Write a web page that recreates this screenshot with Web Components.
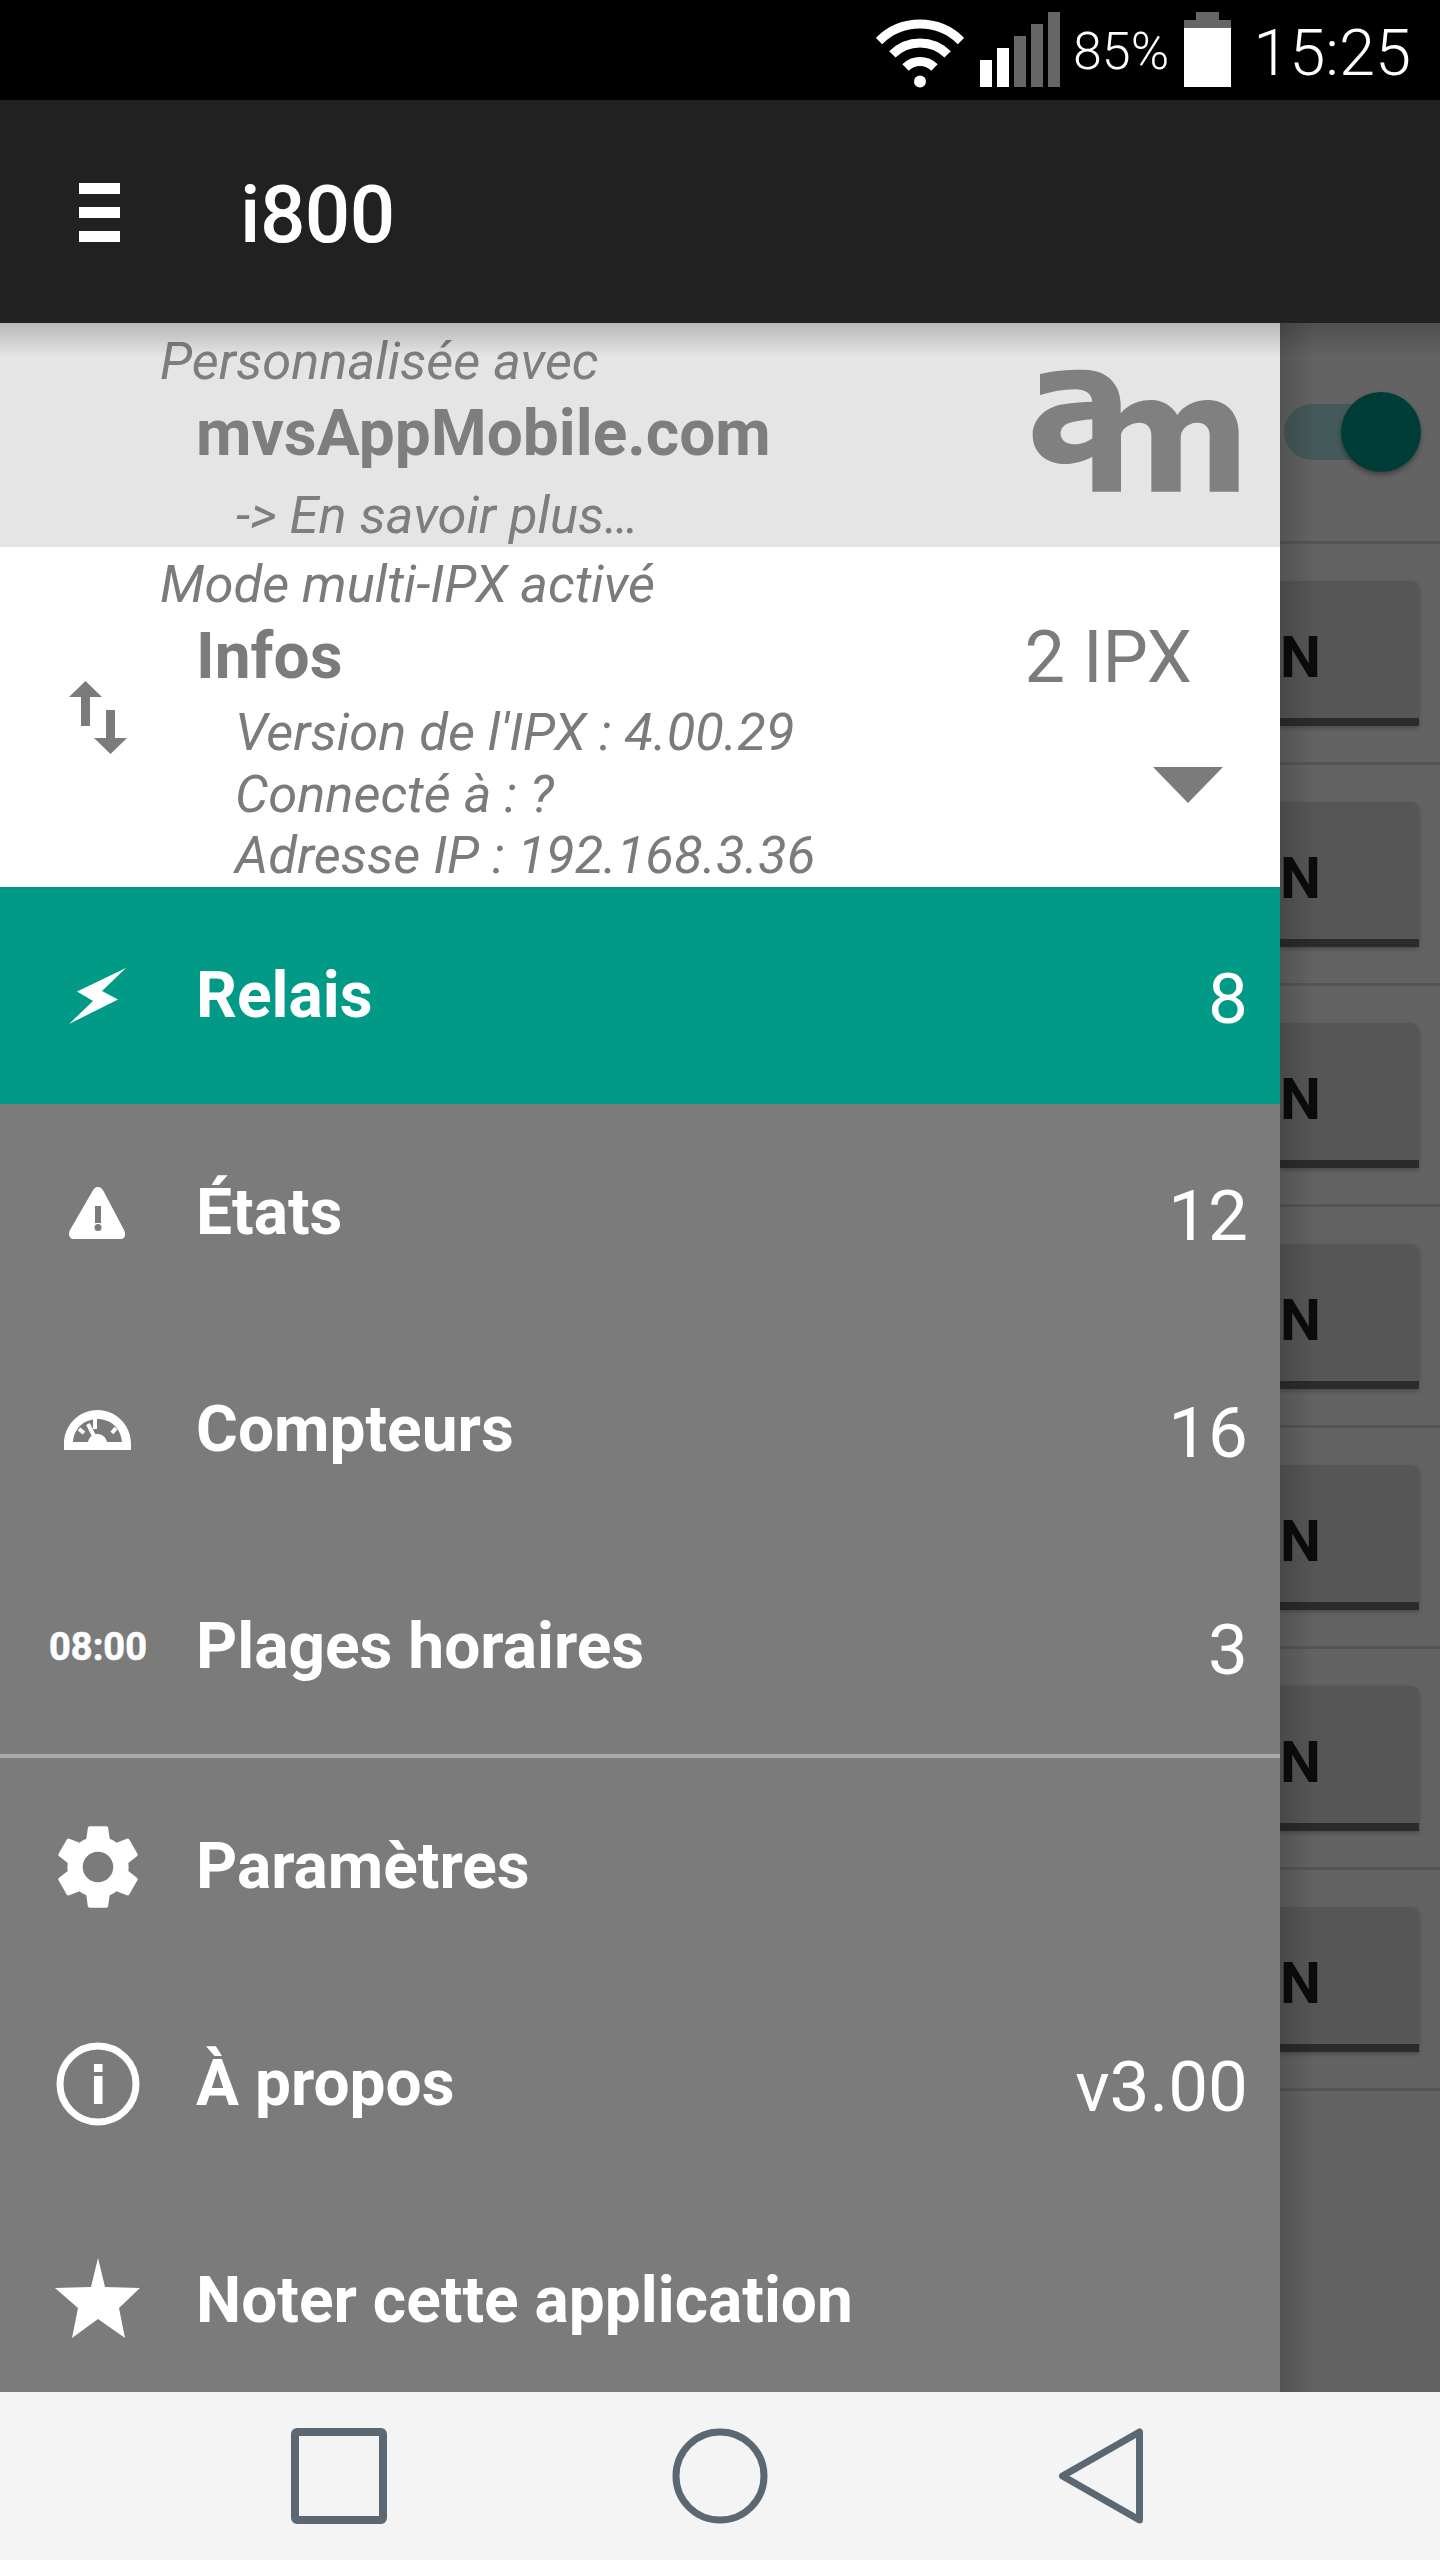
<!DOCTYPE html>
<html lang="fr">
<head>
<meta charset="utf-8">
<title>i800</title>
<style>
  html, body { margin: 0; padding: 0; background: #636363; }
  body { width: 1440px; height: 2560px; overflow: hidden; font-family: Roboto, "Liberation Sans", sans-serif; }
  svg { display: block; }
</style>
</head>
<body>
<phone-shell>
  <status-bar slot="status" battery="85%" time="15:25"></status-bar>
  <app-bar slot="appbar">i800</app-bar>
  <nav-drawer slot="drawer">
    <promo-card>
      <span slot="over">Personnalisée avec</span>
      <span slot="title">mvsAppMobile.com</span>
      <span slot="more">-&gt; En savoir plus…</span>
    </promo-card>
    <info-card>
      <span slot="over">Mode multi-IPX activé</span>
      <span slot="title">Infos</span>
      <span slot="count">2 IPX</span>
      <div>Version de l'IPX : 4.00.29</div>
      <div>Connecté à : ?</div>
      <div>Adresse IP : 192.168.3.36</div>
    </info-card>
    <drawer-item count="8" active>
      <svg slot="icon" width="60" height="60" viewBox="68 965 60 60"><path fill="#fff" d="M126 967 77 990.5 93 1000 69 1023 118 998.5 102 990Z"/></svg>
      Relais
    </drawer-item>
    <drawer-item count="12">
      <svg slot="icon" width="58" height="52" viewBox="69 1186 58 52"><path fill="#fff" d="M98 1186c3 0 4.500 2 6 5l20 38c2 4 1.500 9-4 9H74c-5 0-6-5-4-9l22-38c1.500-3 3-5 6-5Z"/><rect x="95" y="1205" width="6" height="17" fill="#7b7b7b"/><circle cx="98" cy="1226.500" r="3.500" fill="#7b7b7b"/></svg>
      États
    </drawer-item>
    <drawer-item count="16">
      <svg slot="icon" width="68" height="40" viewBox="66 1409 68 40"><path fill="#fff" fill-rule="evenodd" d="M66 1449v-6c0-19 15-34 33.500-34S133 1424 133 1443v6ZM75 1441h15c1-5 5-8 9.500-8s8.500 3 9.500 8h15c-1-14-11.500-23-24.500-23S76 1427 75 1441Z"/><path stroke="#fff" stroke-width="4" fill="none" d="M97 1418v10M81 1428l5 4M118 1427l-4 5M90 1423l6 12"/></svg>
      Compteurs
    </drawer-item>
    <drawer-item count="3">
      <span slot="icon" style="font-size:38px;font-weight:700;color:#fff;line-height:46px;-webkit-text-stroke:.6px #fff">08:00</span>
      Plages horaires
    </drawer-item>
    <drawer-rule></drawer-rule>
    <drawer-item>
      <svg slot="icon" width="102" height="102" viewBox="0 0 24 24"><path fill="#fff" d="M19.140 12.940c.04-.3.06-.61.06-.94 0-.32-.02-.64-.07-.94l2.030-1.580c.18-.14.23-.41.12-.61l-1.920-3.320c-.12-.22-.37-.29-.59-.22l-2.390.96c-.5-.38-1.030-.7-1.620-.94l-.36-2.540c-.04-.24-.24-.41-.48-.41h-3.840c-.24 0-.43.17-.47.41l-.36 2.540c-.59.24-1.130.57-1.620.94l-2.390-.96c-.22-.08-.47 0-.59.22L2.740 8.870c-.12.21-.08.47.12.61l2.030 1.580c-.05.3-.09.63-.09.94s.02.64.07.94l-2.030 1.580c-.18.14-.23.41-.12.61l1.920 3.320c.12.22.37.29.59.22l2.390-.96c.5.38 1.030.7 1.620.94l.36 2.540c.05.24.24.41.48.41h3.840c.24 0 .44-.17.47-.41l.36-2.540c.59-.24 1.130-.56 1.620-.94l2.390.96c.22.08.47 0 .59-.22l1.920-3.320c.12-.22.07-.47-.12-.61l-2.010-1.580zM12 15.600c-1.980 0-3.600-1.620-3.600-3.600s1.620-3.600 3.600-3.600 3.600 1.620 3.600 3.600-1.620 3.600-3.600 3.600z"/></svg>
      Paramètres
    </drawer-item>
    <drawer-item count="v3.00">
      <svg slot="icon" width="84" height="84" viewBox="56 2041 84 84"><circle cx="98" cy="2083" r="38" fill="none" stroke="#fff" stroke-width="7"/><rect x="94" y="2063" width="8.500" height="8" fill="#fff"/><rect x="94" y="2075" width="8.500" height="28" fill="#fff"/></svg>
      À propos
    </drawer-item>
    <drawer-item>
      <svg slot="icon" style="margin-top:-5px" width="86" height="80" viewBox="55 2258 86 80"><path fill="#fff" d="M98 2258 105 2287 140 2288 119 2308 125 2338 98 2319 72 2338 78 2308 55 2288 91 2287Z"/></svg>
      Noter cette application
    </drawer-item>
  </nav-drawer>
  <relay-pane slot="pane">
    <relay-switch></relay-switch>
    <relay-row>N</relay-row>
    <relay-row>N</relay-row>
    <relay-row>N</relay-row>
    <relay-row>N</relay-row>
    <relay-row>N</relay-row>
    <relay-row>N</relay-row>
    <relay-row>N</relay-row>
  </relay-pane>
  <soft-keys slot="keys"></soft-keys>
</phone-shell>

<script>
class PhoneShell extends HTMLElement {
    constructor() {
        super();
        this._root = this.attachShadow({ mode: 'open' });
        this._root.innerHTML = `
            <style>
            :host { display: flex; flex-direction: column; width: 1440px; height: 2560px; }
            .main { position: relative; display: flex; height: 2069px; overflow: hidden; }
            .shade {
              position: absolute; left: 0; right: 0; top: 0; height: 34px;
              background: linear-gradient(rgba(0,0,0,.2), rgba(0,0,0,0));
            }
            </style>
            <slot name="status"></slot>
            <slot name="appbar"></slot>
            <div class="main">
              <slot name="drawer"></slot>
              <slot name="pane"></slot>
              <div class="shade"></div>
            </div>
            <slot name="keys"></slot>
        `;
    }
}

class StatusBar extends HTMLElement {
    constructor() {
        super();
        this._root = this.attachShadow({ mode: 'open' });
        this._root.innerHTML = `
            <style>
            :host { display: flex; justify-content: flex-end; height: 100px; background: #000; color: #fff; padding-right: 29px; box-sizing: border-box; }
            svg { display: block; }
            .pct { font-size: 52px; line-height: 100px; margin: 2px 15px 0 13px; font-weight: 300; }
            .time { font-size: 65px; line-height: 100px; margin: 3px 0 0 22px; font-weight: 300; }
            .wifi { margin-right: 16px; }
            </style>
            <svg class="wifi" width="88" height="100" viewBox="874 0 88 100" fill="none" stroke="#fff" stroke-width="9">
              <path d="M877 41A58 58 0 0 1 959 41"/>
              <path d="M890.400 54.400A39 39 0 0 1 945.600 54.400"/>
              <path d="M903.500 67.500A20.500 20.500 0 0 1 932.500 67.500"/>
              <circle cx="918" cy="81.500" r="6" fill="#fff" stroke="none"/>
            </svg>
            <svg width="80" height="100" viewBox="978 0 80 100">
              <rect x="978" y="60" width="12" height="27" fill="#fff"/>
              <rect x="995" y="48" width="12" height="39" fill="#fff"/>
              <rect x="1012" y="36" width="12" height="51" fill="#666"/>
              <rect x="1029" y="24" width="12" height="63" fill="#666"/>
              <rect x="1046" y="12" width="12" height="75" fill="#666"/>
            </svg>
            <span class="pct"></span>
            <svg width="47" height="100" viewBox="1185 0 47 100">
              <path d="M1197 12h23v8h12v8h-47v-8h12Z" fill="#666"/>
              <rect x="1185" y="28" width="47" height="59" fill="#fff"/>
            </svg>
            <span class="time"></span>
        `;
        this._root.querySelector('.pct').textContent = this.getAttribute('battery');
        this._root.querySelector('.time').textContent = this.getAttribute('time');
    }
}

class AppBar extends HTMLElement {
    constructor() {
        super();
        this._root = this.attachShadow({ mode: 'open' });
        this._root.innerHTML = `
            <style>
            :host { display: flex; align-items: center; height: 223px; background: #212121; color: #fff; font-size: 80px; font-weight: 500; box-sizing: border-box; padding-left: 79px; }
            .burger { display: flex; flex-direction: column; gap: 13px; width: 41px; margin-right: 120px; margin-top: 2px; }
            .burger i { display: block; height: 11px; background: #fff; }
            .title { margin-top: 7px; letter-spacing: -.5px; }
            </style>
            <div class="burger"><i></i><i></i><i></i></div>
            <div class="title"><slot></slot></div>
        `;
    }
}

class NavDrawer extends HTMLElement {
    constructor() {
        super();
        this._root = this.attachShadow({ mode: 'open' });
        this._root.innerHTML = `
            <style>
            :host { display: block; flex: none; width: 1280px; background: #7b7b7b; }
            </style>
            <slot></slot>
        `;
    }
}

class PromoCard extends HTMLElement {
    constructor() {
        super();
        this._root = this.attachShadow({ mode: 'open' });
        this._root.innerHTML = `
            <style>
            :host { display: flex; justify-content: space-between; height: 224px; background: #e5e5e5; color: #7e7e7e; box-sizing: border-box; padding: 8px 30px 0 160px; }
            .over, .more { font-size: 52.500px; line-height: 60px; font-style: italic; }
            .title { font-size: 64px; line-height: 70px; font-weight: 700; margin: 8px 0 0 36px; }
            .more { margin: 16px 0 0 76px; }
            svg { display: block; margin-top: 29px; }
            </style>
            <div>
              <div class="over"><slot name="over"></slot></div>
              <div class="title"><slot name="title"></slot></div>
              <div class="more"><slot name="more"></slot></div>
            </div>
            <svg width="230" height="140" viewBox="0 0 690 420">
              <path fill="#808080" fill-rule="evenodd" d="M60 42C110 30 170 28 205 30C265 35 300 75 302 130L302 160C330 125 375 118 400 120C430 122 458 140 472 165C490 135 530 118 570 120C625 124 655 165 656 215V395H569V225C569 200 552 187 530 188C505 189 482 205 482 235V395H394V225C394 200 378 187 355 188C330 190 305 205 303 225V395H217V290C190 305 160 312 130 312C75 310 38 275 38 225C38 175 80 140 130 133C160 128 190 125 217 125C215 100 195 88 165 88C130 88 95 95 60 105ZM217 178C190 180 165 183 145 190C128 197 120 210 122 225C125 245 145 253 165 253C185 253 205 245 217 235Z"/>
            </svg>
        `;
    }
}

class InfoCard extends HTMLElement {
    constructor() {
        super();
        this._root = this.attachShadow({ mode: 'open' });
        this._root.innerHTML = `
            <style>
            :host { display: flex; height: 340px; background: #fff; color: #7b7b7b; box-sizing: border-box; }
            .icon { flex: none; width: 160px; display: flex; align-items: center; }
            .icon svg { display: block; margin-left: 69px; }
            .text { flex: 1; padding-top: 7px; }
            .over { font-size: 52.500px; line-height: 60px; font-style: italic; }
            .title { font-size: 64px; line-height: 70px; font-weight: 700; margin: 8px 0 0 36px; }
            .details { font-size: 52.500px; line-height: 61.500px; font-style: italic; margin: 10px 0 0 75px; }
            .side { display: flex; flex-direction: column; align-items: flex-end; padding: 71px 57px 0 0; }
            .count { font-size: 72px; line-height: 80px; margin-right: 31px; }
            .arrow { width: 0; height: 0; margin-top: 69px; border-left: 35px solid transparent; border-right: 35px solid transparent; border-top: 36px solid #7b7b7b; }
            </style>
            <div class="icon">
              <svg width="58" height="73" viewBox="69 680 58 73">
                <path fill="#7b7b7b" d="M85.500 680 102 696H90V725H81V696H69ZM106 709H115V737H127L110.500 753 94 737H106Z"/>
              </svg>
            </div>
            <div class="text">
              <div class="over"><slot name="over"></slot></div>
              <div class="title"><slot name="title"></slot></div>
              <div class="details"><slot></slot></div>
            </div>
            <div class="side">
              <div class="count"><slot name="count"></slot></div>
              <div class="arrow"></div>
            </div>
        `;
    }
}

class DrawerItem extends HTMLElement {
    constructor() {
        super();
        this._root = this.attachShadow({ mode: 'open' });
        this._root.innerHTML = `
            <style>
            :host { display: flex; align-items: center; height: 217px; color: #fff; background: #7b7b7b; }
            :host([active]) { background: #009a87; }
            .icon { flex: none; width: 196px; display: flex; justify-content: center; align-items: center; }
            .label { flex: 1; font-size: 64px; font-weight: 700; }
            .count { font-size: 71px; padding: 5px 32px 0 0; }
            </style>
            <div class="icon"><slot name="icon"></slot></div>
            <div class="label"><slot></slot></div>
            <div class="count"></div>
        `;
        this._root.querySelector('.count').textContent = this.getAttribute('count') || '';
    }
}

class DrawerRule extends HTMLElement {
    constructor() {
        super();
        this.attachShadow({ mode: 'open' }).innerHTML = `
            <style>:host { display: block; position: relative; height: 4px; margin-top: -1px; background: #aaa; }</style>
        `;
    }
}

class RelayPane extends HTMLElement {
    constructor() {
        super();
        this._root = this.attachShadow({ mode: 'open' });
        this._root.innerHTML = `
            <style>
            :host { display: block; position: relative; flex: 1; background: #636363; overflow: hidden; }
            .edge { position: absolute; left: 0; top: 0; bottom: 0; width: 36px; background: linear-gradient(90deg, rgba(0,0,0,.16), rgba(0,0,0,0)); }
            </style>
            <slot></slot>
            <div class="edge"></div>
        `;
    }
}

class RelaySwitch extends HTMLElement {
    constructor() {
        super();
        this.attachShadow({ mode: 'open' }).innerHTML = `
            <style>
            :host { display: flex; align-items: center; height: 218px; border-bottom: 3px solid #555; padding-left: 4px; }
            .box { position: relative; width: 137px; height: 80px; display: flex; align-items: center; }
            .track { width: 116px; height: 56px; border-radius: 28px; background: #44595a; }
            .knob { position: absolute; right: 0; top: 0; width: 80px; height: 80px; border-radius: 50%; background: #003d36; box-shadow: 0 3px 5px rgba(0,0,0,.35); }
            </style>
            <div class="box"><div class="track"></div><div class="knob"></div></div>
        `;
    }
}

class RelayRow extends HTMLElement {
    constructor() {
        super();
        this.attachShadow({ mode: 'open' }).innerHTML = `
            <style>
            :host { display: flow-root; height: 218px; border-bottom: 3px solid #555; }
            .btn {
              display: flex; align-items: center; box-sizing: border-box;
              width: 139px; height: 145px; margin-top: 37px; padding-top: 15px;
              background: #565656; border-bottom: 8px solid #2b2b2b; border-top-right-radius: 8px;
              box-shadow: 0 2px 4px rgba(0,0,0,.25);
              color: #0b0b0b; font-size: 58px; font-weight: 700;
            }
            </style>
            <div class="btn"><span><slot></slot></span></div>
        `;
    }
}

class SoftKeys extends HTMLElement {
    constructor() {
        super();
        this._root = this.attachShadow({ mode: 'open' });
        this._root.innerHTML = `
            <style>
            :host { display: flex; align-items: center; height: 168px; background: #f4f4f4; padding-left: 291px; box-sizing: border-box; }
            svg { display: block; }
            </style>
            <svg style="margin-right:285px" width="96" height="96" viewBox="0 0 96 96"><rect x="4" y="4" width="88" height="88" rx="2" fill="none" stroke="#5b6873" stroke-width="8"/></svg>
            <svg style="margin-right:291px" width="96" height="96" viewBox="0 0 96 96"><circle cx="48" cy="48" r="44" fill="none" stroke="#5b6873" stroke-width="7"/></svg>
            <svg width="84" height="96" viewBox="0 0 84 96"><path d="M80.500 4V92L3.500 48Z" fill="none" stroke="#5b6873" stroke-width="7" stroke-linejoin="round"/></svg>
        `;
    }
}

customElements.define('phone-shell', PhoneShell);
customElements.define('status-bar', StatusBar);
customElements.define('app-bar', AppBar);
customElements.define('nav-drawer', NavDrawer);
customElements.define('promo-card', PromoCard);
customElements.define('info-card', InfoCard);
customElements.define('drawer-item', DrawerItem);
customElements.define('drawer-rule', DrawerRule);
customElements.define('relay-pane', RelayPane);
customElements.define('relay-switch', RelaySwitch);
customElements.define('relay-row', RelayRow);
customElements.define('soft-keys', SoftKeys);
</script>
</body>
</html>
